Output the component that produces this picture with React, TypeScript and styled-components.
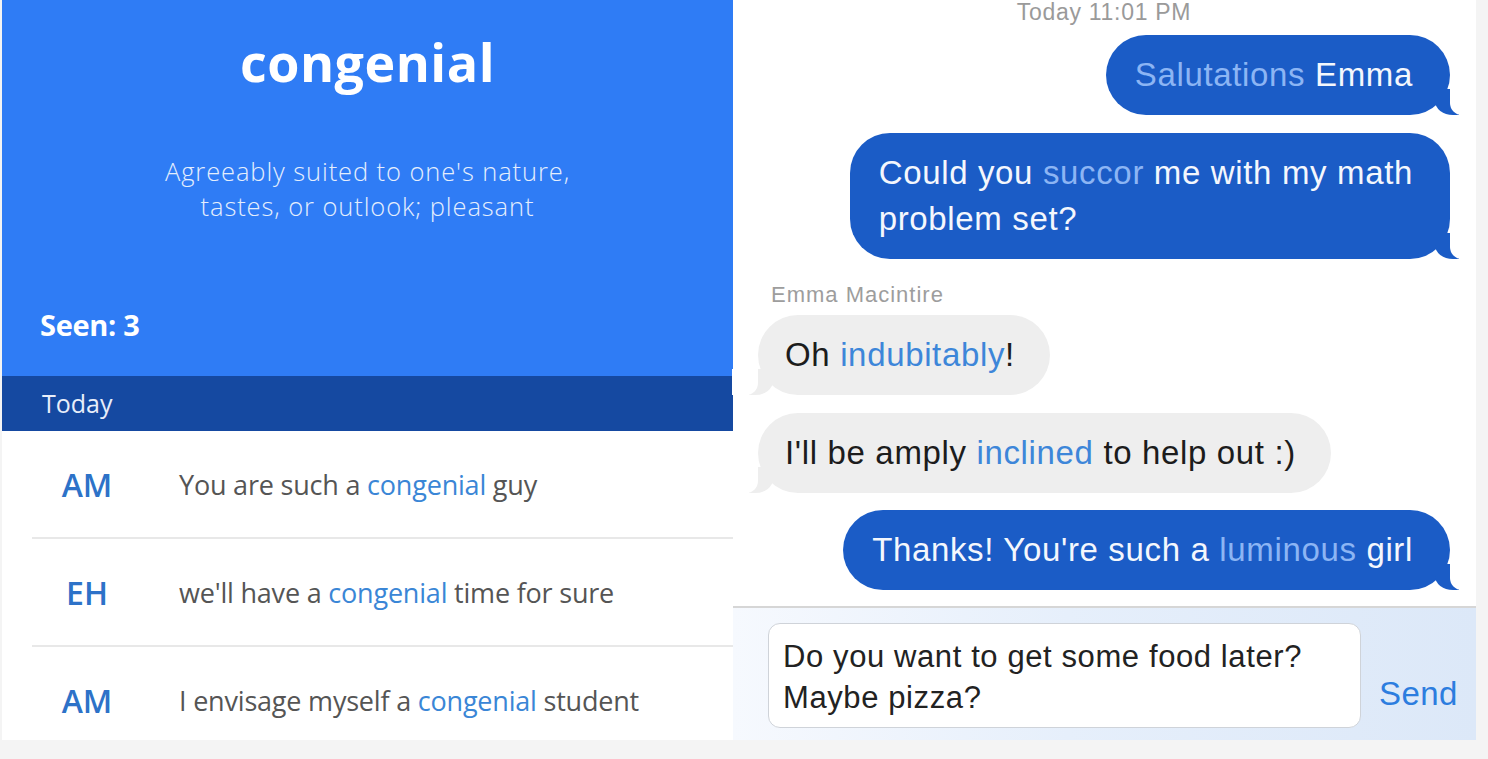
import React from "react";
import styled, { createGlobalStyle } from "styled-components";

const GlobalStyle = createGlobalStyle`
  html, body {
    margin: 0;
    padding: 0;
    background: #f4f4f4;
  }
`;

const words = [
  { initials: "AM", before: "You are such a ", after: " guy" },
  { initials: "EH", before: "we'll have a ", after: " time for sure" },
  { initials: "AM", before: "I envisage myself a ", after: " student" }
];

export default function App() {
  return (
    <>
      <GlobalStyle />
      <Screen>
        <WordPanel>
          <WordHeader>
            <Title>congenial</Title>
            <Definition>
              <DefLine>Agreeably suited to one's nature,</DefLine>
              <DefLine>tastes, or outlook; pleasant</DefLine>
            </Definition>
            <Seen>Seen: 3</Seen>
          </WordHeader>
          <DayBar>Today</DayBar>
          <UsageList>
            {words.map((w, i) => (
              <UsageRow key={i} $last={i === words.length - 1}>
                <Initials>{w.initials}</Initials>
                <UsageText>
                  {w.before}
                  <Highlight>congenial</Highlight>
                  {w.after}
                </UsageText>
              </UsageRow>
            ))}
          </UsageList>
        </WordPanel>

        <ChatPanel>
          <Thread>
            <Stamp>Today 11:01 PM</Stamp>
            <Bubble $mine $mt={11}>
              <Word $mine>Salutations</Word> Emma
            </Bubble>
            <Bubble $mine $mt={18}>
              Could you <Word $mine>succor</Word> me with my math
              <br />
              problem set?
            </Bubble>
            <Sender>Emma Macintire</Sender>
            <Bubble $mt={0}>
              Oh <Word>indubitably</Word>!
            </Bubble>
            <Bubble $mt={18}>
              I'll be amply <Word>inclined</Word> to help out :)
            </Bubble>
            <Bubble $mine $mt={17}>
              Thanks! You're such a <Word $mine>luminous</Word> girl
            </Bubble>
          </Thread>
          <Composer>
            <InputBox>
              Do you want to get some food later?
              <br />
              Maybe pizza?
            </InputBox>
            <SendButton>Send</SendButton>
          </Composer>
        </ChatPanel>
      </Screen>
    </>
  );
}

const Screen = styled.div`
  display: flex;
  height: 740px;
  padding-left: 2px;
`;

const WordPanel = styled.div`
  width: 731px;
  display: flex;
  flex-direction: column;
  background: #ffffff;
  overflow: hidden;
  font-family: "Open Sans", Lato, sans-serif;
`;

const WordHeader = styled.div`
  height: 376px;
  box-sizing: border-box;
  background: #2f7cf5;
  color: #ffffff;
  display: flex;
  flex-direction: column;
  padding: 30px 38px 0;
`;

const Title = styled.div`
  text-align: center;
  font-size: 52px;
  font-weight: 700;
  line-height: 64px;
  letter-spacing: 0.5px;
`;

const Definition = styled.div`
  margin-top: 60px;
  display: flex;
  flex-direction: column;
  align-items: center;
  font-size: 25.5px;
  font-weight: 300;
  letter-spacing: 0.9px;
  color: #e4eefd;
`;

const DefLine = styled.div`
  height: 35px;
  line-height: 35px;
`;

const Seen = styled.div`
  margin-top: 84px;
  font-size: 29px;
  font-weight: 700;
  line-height: 34px;
  letter-spacing: -0.3px;
`;

const DayBar = styled.div`
  height: 55px;
  box-sizing: border-box;
  background: #1549a1;
  color: #e8eefa;
  font-size: 25px;
  padding: 10px 0 0 40px;
`;

const UsageList = styled.div`
  flex: 1;
  overflow: hidden;
`;

const UsageRow = styled.div<{ $last?: boolean }>`
  height: 106px;
  margin-left: 30px;
  display: flex;
  align-items: center;
  border-bottom: ${(p) => (p.$last ? "none" : "2px solid #e8e8e8")};
`;

const Initials = styled.div`
  width: 110px;
  text-align: center;
  color: #2d72c8;
  font-size: 32px;
  font-weight: 600;
`;

const UsageText = styled.div`
  margin-left: 37px;
  font-size: 27px;
  letter-spacing: -0.2px;
  color: #555555;
`;

const Highlight = styled.span`
  color: #3a86d6;
`;

const ChatPanel = styled.div`
  width: 743px;
  display: flex;
  flex-direction: column;
  background: #ffffff;
  font-family: "Liberation Sans", Arial, sans-serif;
`;

const Thread = styled.div`
  flex: 1;
  display: flex;
  flex-direction: column;
  padding: 0 26px 0 25px;
  border-bottom: 2px solid #d6d6d6;
`;

const Stamp = styled.div`
  text-align: center;
  font-size: 23px;
  line-height: 24px;
  letter-spacing: 0.7px;
  color: #9a9a9a;
`;

const Sender = styled.div`
  margin: 25px 0 9px 13px;
  font-size: 22px;
  line-height: 22px;
  letter-spacing: 1px;
  color: #9d9d9d;
`;

const Bubble = styled.div<{ $mine?: boolean; $mt: number }>`
  position: relative;
  align-self: ${(p) => (p.$mine ? "flex-end" : "flex-start")};
  margin-top: ${(p) => p.$mt}px;
  padding: 17px ${(p) => (p.$mine ? "37px 17px 29px" : "35px 17px 27px")};
  border-radius: 40px;
  font-size: 33px;
  line-height: 46px;
  letter-spacing: 0.65px;
  background: ${(p) => (p.$mine ? "#1b5cc6" : "#eeeeee")};
  color: ${(p) => (p.$mine ? "#f4f7fd" : "#1c1c1c")};

  &::before {
    content: "";
    position: absolute;
    bottom: 0;
    ${(p) => (p.$mine ? "right: -9px;" : "left: -9px;")}
    width: 24px;
    height: 26px;
    background: ${(p) => (p.$mine ? "#1b5cc6" : "#eeeeee")};
    ${(p) =>
      p.$mine
        ? "border-bottom-left-radius: 18px 14px;"
        : "border-bottom-right-radius: 18px 14px;"}
  }

  &::after {
    content: "";
    position: absolute;
    bottom: 0;
    ${(p) => (p.$mine ? "right: -26px;" : "left: -26px;")}
    width: 26px;
    height: 26px;
    background: #ffffff;
    ${(p) =>
      p.$mine
        ? "border-bottom-left-radius: 12px;"
        : "border-bottom-right-radius: 12px;"}
  }
`;

const Word = styled.span<{ $mine?: boolean }>`
  color: ${(p) => (p.$mine ? "#8cb5f4" : "#3d86d9")};
`;

const Composer = styled.div`
  height: 132px;
  box-sizing: border-box;
  display: flex;
  align-items: flex-end;
  gap: 18px;
  padding: 15px 18px 12px 35px;
  background: linear-gradient(to right, #f6f9fe 0%, #e6effb 45%, #dce8f8 100%);
`;

const InputBox = styled.div`
  width: 593px;
  height: 105px;
  box-sizing: border-box;
  background: #ffffff;
  border: 1.5px solid #cfd3d9;
  border-radius: 12px;
  padding: 12px 14px;
  font-size: 31px;
  line-height: 41px;
  letter-spacing: 0.6px;
  color: #222222;
`;

const SendButton = styled.div`
  margin-bottom: 16px;
  font-size: 33px;
  line-height: 36px;
  letter-spacing: 0.4px;
  color: #2c7ddf;
`;
